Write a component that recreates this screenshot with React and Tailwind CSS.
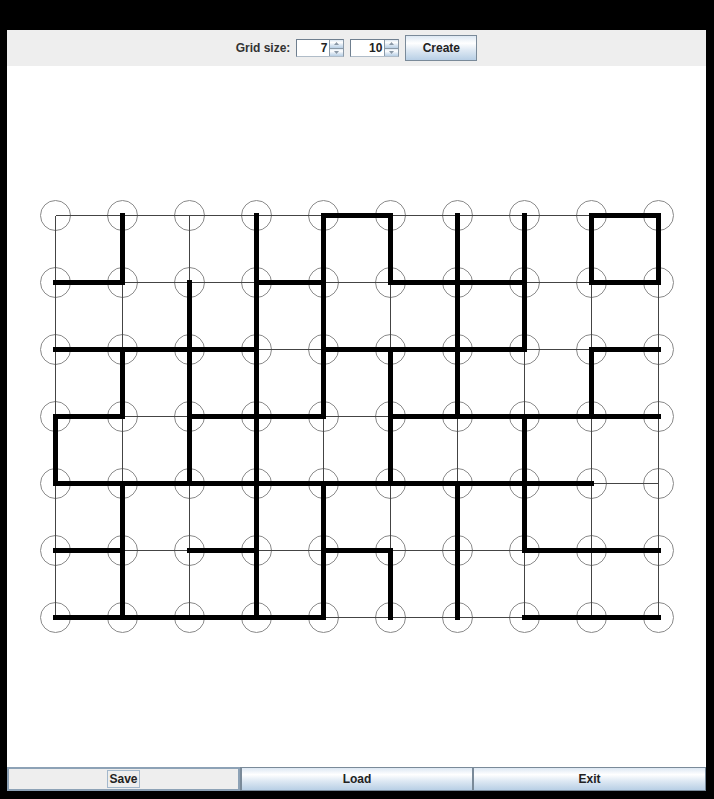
import React from "react";

const ROWS = 7;
const COLS = 10;
const STEP = 67;

function X(c) {
  return 55.5 + STEP * c;
}
function Y(r) {
  return 215.5 + STEP * r;
}

// thick horizontal segments: row -> list of starting columns
const horizontal = [
  [4, 8],
  [0, 3, 5, 6, 8],
  [0, 1, 2, 4, 5, 6, 8],
  [0, 2, 3, 5, 6, 7, 8],
  [0, 1, 2, 3, 4, 5, 6, 7],
  [0, 2, 4, 7, 8],
  [0, 1, 2, 3, 7, 8],
];

// thick vertical segments: starting row -> list of columns
const vertical = [
  [1, 3, 4, 5, 6, 7, 8, 9],
  [2, 3, 4, 6, 7],
  [1, 2, 3, 4, 5, 6, 8],
  [0, 2, 3, 5, 7],
  [1, 3, 4, 6, 7],
  [1, 3, 4, 5, 6],
];

const metalGradient =
  "bg-[linear-gradient(to_bottom,#dde8f3_0%,#ffffff_30%,#dde8f3_60%,#b8cfe5_100%)]";

function Spinner({ value, width }) {
  return (
    <div
      className="flex h-[18px] border border-t-[#6f7f8f] border-l-[#6f7f8f] border-b-[#b0bcc8] border-r-[#8b9aa8] bg-white"
      style={{ width }}
    >
      <div className="flex-1 flex items-center justify-end pr-[2px] text-[12px] font-bold text-[#222]">
        {value}
      </div>
      <div className="w-[14px] flex flex-col border-l border-[#8b9aa8]">
        <div
          className={`flex-1 flex items-center justify-center border-b border-[#8b9aa8] ${metalGradient}`}
        >
          <svg width="5" height="3" viewBox="0 0 5 3">
            <path d="M2.5 0 L5 3 L0 3 Z" fill="#8a98a6" />
          </svg>
        </div>
        <div className={`flex-1 flex items-center justify-center ${metalGradient}`}>
          <svg width="5" height="3" viewBox="0 0 5 3">
            <path d="M0 0 L5 0 L2.5 3 Z" fill="#8a98a6" />
          </svg>
        </div>
      </div>
    </div>
  );
}

function Board() {
  const rows = Array.from({ length: ROWS }, (_, r) => r);
  const cols = Array.from({ length: COLS }, (_, c) => c);

  return (
    <svg width="699" height="701" viewBox="7 66 699 701" className="block">
      {rows.map((r) =>
        cols.map((c) => (
          <circle
            key={`o${r}-${c}`}
            cx={X(c)}
            cy={Y(r)}
            r="15"
            fill="none"
            stroke="#8a8a8a"
            strokeWidth="1"
          />
        ))
      )}
      {rows.map((r) => (
        <line
          key={`hr${r}`}
          x1={X(0)}
          y1={Y(r)}
          x2={X(COLS - 1)}
          y2={Y(r)}
          stroke="#444"
          strokeWidth="1"
          shapeRendering="crispEdges"
        />
      ))}
      {cols.map((c) => (
        <line
          key={`vc${c}`}
          x1={X(c)}
          y1={Y(0)}
          x2={X(c)}
          y2={Y(ROWS - 1)}
          stroke="#444"
          strokeWidth="1"
          shapeRendering="crispEdges"
        />
      ))}
      {horizontal.map((list, r) =>
        list.map((c) => (
          <line
            key={`h${r}-${c}`}
            x1={X(c)}
            y1={Y(r)}
            x2={X(c + 1)}
            y2={Y(r)}
            stroke="#000"
            strokeWidth="5"
            strokeLinecap="square"
            shapeRendering="crispEdges"
          />
        ))
      )}
      {vertical.map((list, r) =>
        list.map((c) => (
          <line
            key={`v${r}-${c}`}
            x1={X(c)}
            y1={Y(r)}
            x2={X(c)}
            y2={Y(r + 1)}
            stroke="#000"
            strokeWidth="5"
            strokeLinecap="square"
            shapeRendering="crispEdges"
          />
        ))
      )}
    </svg>
  );
}

export default function App() {
  return (
    <div
      className="w-[714px] h-[799px] bg-black pt-[30px] pl-[7px] pr-[8px] pb-[8px] flex flex-col text-[#333]"
      style={{ fontFamily: '"Liberation Sans", Arial, sans-serif' }}
    >
      <div className="h-[36px] bg-[#eeeeee] flex items-center justify-center gap-[6px]">
        <span className="text-[12px] font-bold">Grid size:</span>
        <Spinner value="7" width={48} />
        <Spinner value="10" width={49} />
        <button
          className={`w-[72px] h-[26px] border border-[#7a8a99] text-[12px] font-bold text-[#222] ${metalGradient}`}
        >
          Create
        </button>
      </div>

      <div className="h-[701px] bg-white">
        <Board />
      </div>

      <div className="h-[24px] grid grid-cols-3">
        <button className="bg-[#eeeeee] border-2 border-[#8da2b6] flex items-center justify-center text-[12px] font-bold text-[#222]">
          <span className="border border-[#a3b8cc] px-[1px] leading-[16px]">Save</span>
        </button>
        <button
          className={`border border-[#7a8a99] border-l-2 text-[12px] font-bold text-[#222] ${metalGradient}`}
        >
          Load
        </button>
        <button
          className={`border border-[#7a8a99] text-[12px] font-bold text-[#222] ${metalGradient}`}
        >
          Exit
        </button>
      </div>
    </div>
  );
}
